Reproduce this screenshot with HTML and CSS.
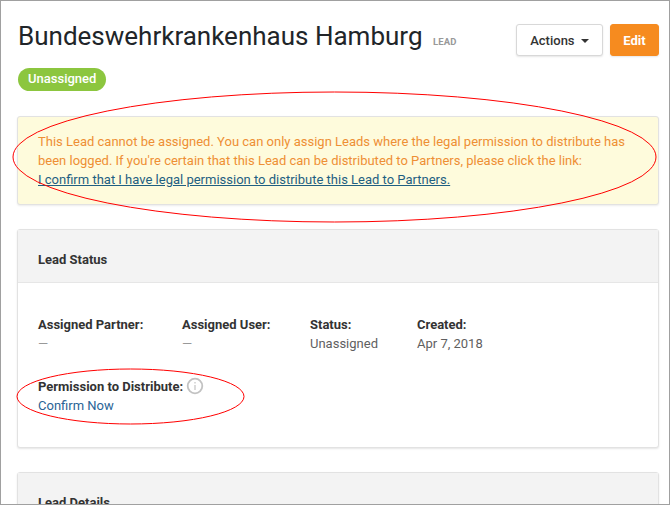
FILE: index.html
```html
<!DOCTYPE html>
<html>

<head>
    <title>Lead</title>
    <link rel="stylesheet" href="styles.css">
</head>

<body>
    <div class="window">
        <div class="page-header">
            <h1>Bundeswehrkrankenhaus Hamburg <small>LEAD</small></h1>
            <div class="header-actions">
                <button class="btn btn-default">Actions <span class="caret"></span></button>
                <button class="btn btn-primary">Edit</button>
            </div>
        </div>

        <div class="badge-row"><span class="badge">Unassigned</span></div>

        <div class="alert">
            This Lead cannot be assigned. You can only assign Leads where the legal permission to distribute has
            been logged. If you're certain that this Lead can be distributed to Partners, please click the link:<br>
            <a href="#">I confirm that I have legal permission to distribute this Lead to Partners.</a>
        </div>

        <div class="card">
            <div class="card-header">Lead Status</div>
            <div class="card-body">
                <div class="fields">
                    <div class="field field-partner">
                        <label>Assigned Partner:</label>
                        <div class="dash">—</div>
                    </div>
                    <div class="field field-user">
                        <label>Assigned User:</label>
                        <div class="dash">—</div>
                    </div>
                    <div class="field field-status">
                        <label>Status:</label>
                        <div>Unassigned</div>
                    </div>
                    <div class="field">
                        <label>Created:</label>
                        <div>Apr 7, 2018</div>
                    </div>
                </div>
                <div class="field permission">
                    <label>Permission to Distribute:
                        <svg class="info" width="18" height="18" viewBox="0 0 18 18">
                            <circle cx="9" cy="9" r="7.3" fill="none" stroke="#c2c2c2" stroke-width="1.8"/>
                            <rect x="8.3" y="8" width="1.4" height="5" fill="#ccc"/>
                            <rect x="8.3" y="5" width="1.4" height="1.5" fill="#ccc"/>
                        </svg>
                    </label>
                    <div><a href="#">Confirm Now</a></div>
                </div>
            </div>
        </div>

        <div class="card">
            <div class="card-header">Lead Details</div>
        </div>

        <svg class="marks" width="670" height="505" viewBox="0 0 670 505">
            <ellipse cx="334.5" cy="157" rx="321.5" ry="65" fill="none" stroke="#f00" stroke-width="1"/>
            <ellipse cx="130.5" cy="396.5" rx="113.5" ry="27.5" fill="none" stroke="#f00" stroke-width="1"/>
        </svg>
    </div>
</body>

</html>
```

FILE: styles.css
```css
html, body {
    margin: 0;
    padding: 0;
}

body {
    font-family: Roboto, "Liberation Sans", sans-serif;
    font-size: 13px;
    color: #5f5f5f;
    background-color: #fff;
}

a {
    color: #1f5f82;
}

.window {
    position: relative;
    box-sizing: border-box;
    width: 670px;
    height: 505px;
    padding: 0 10px 0 16px;
    overflow: hidden;
    border: 1px solid #a0a0a0;
}

.page-header {
    display: flex;
    justify-content: space-between;
    align-items: flex-start;
    padding-top: 23px;
}

h1 {
    margin: 0;
    padding-left: 1px;
    font-size: 26px;
    font-weight: 400;
    line-height: 24px;
    color: #212529;
    white-space: nowrap;
}

h1 small {
    margin-left: 4px;
    font-size: 9.5px;
    font-weight: 700;
    letter-spacing: 0.1px;
    color: #999;
}

.header-actions {
    display: flex;
    gap: 7px;
}

.btn {
    height: 32px;
    padding: 0;
    border-radius: 3px;
    font-family: inherit;
    font-size: 13px;
    font-weight: 500;
}

.btn-default {
    width: 87px;
    background-color: #fff;
    border: 1px solid #d8d8d8;
    color: #333;
    box-shadow: 0 1px 2px rgba(0, 0, 0, 0.1);
}

.btn-primary {
    width: 49px;
    background-color: #f68b1f;
    border: 1px solid #f68b1f;
    color: #fff;
    font-weight: 700;
    box-shadow: 0 1px 2px rgba(0, 0, 0, 0.1);
}

.caret {
    display: inline-block;
    margin-left: 3px;
    vertical-align: middle;
    border-top: 4px solid #333;
    border-left: 4px solid transparent;
    border-right: 4px solid transparent;
}

.badge-row {
    margin-top: 12px;
    padding-left: 1px;
    line-height: 0;
}

.badge {
    display: inline-block;
    height: 23px;
    padding: 0 10px;
    border-radius: 12px;
    background-color: #8cc63f;
    color: #fff;
    font-size: 13px;
    font-weight: 500;
    line-height: 22px;
}

.alert {
    box-sizing: border-box;
    height: 89px;
    margin-top: 25px;
    padding: 15px 20px 0;
    background-color: #fefbdc;
    border: 1px solid #e2e2e2;
    border-radius: 3px;
    box-shadow: 0 1px 2px rgba(0, 0, 0, 0.08);
    color: #ee8f34;
    line-height: 19px;
}

.card {
    margin-top: 24px;
    background-color: #fff;
    border: 1px solid #e2e2e2;
    border-radius: 3px;
    box-shadow: 0 1px 2px rgba(0, 0, 0, 0.1);
}

.card-header {
    box-sizing: border-box;
    height: 53px;
    padding: 0 20px;
    background-color: #f3f3f3;
    border-bottom: 1px solid #e6e6e6;
    color: #333;
    font-weight: 700;
    line-height: 60px;
}

.card-body {
    box-sizing: border-box;
    height: 164px;
    padding: 32px 20px 0;
    line-height: 19px;
}

.fields {
    display: flex;
}

.field-partner {
    width: 144px;
}

.field-user {
    width: 128px;
}

.field-status {
    width: 107px;
}

.field label {
    display: block;
    color: #333;
    font-weight: 700;
}

.dash {
    color: #999;
}

.permission {
    margin-top: 24px;
}

.permission a {
    color: #2a6496;
    text-decoration: none;
}

.info {
    vertical-align: -4px;
}

.marks {
    position: absolute;
    left: -1px;
    top: -1px;
}
```
